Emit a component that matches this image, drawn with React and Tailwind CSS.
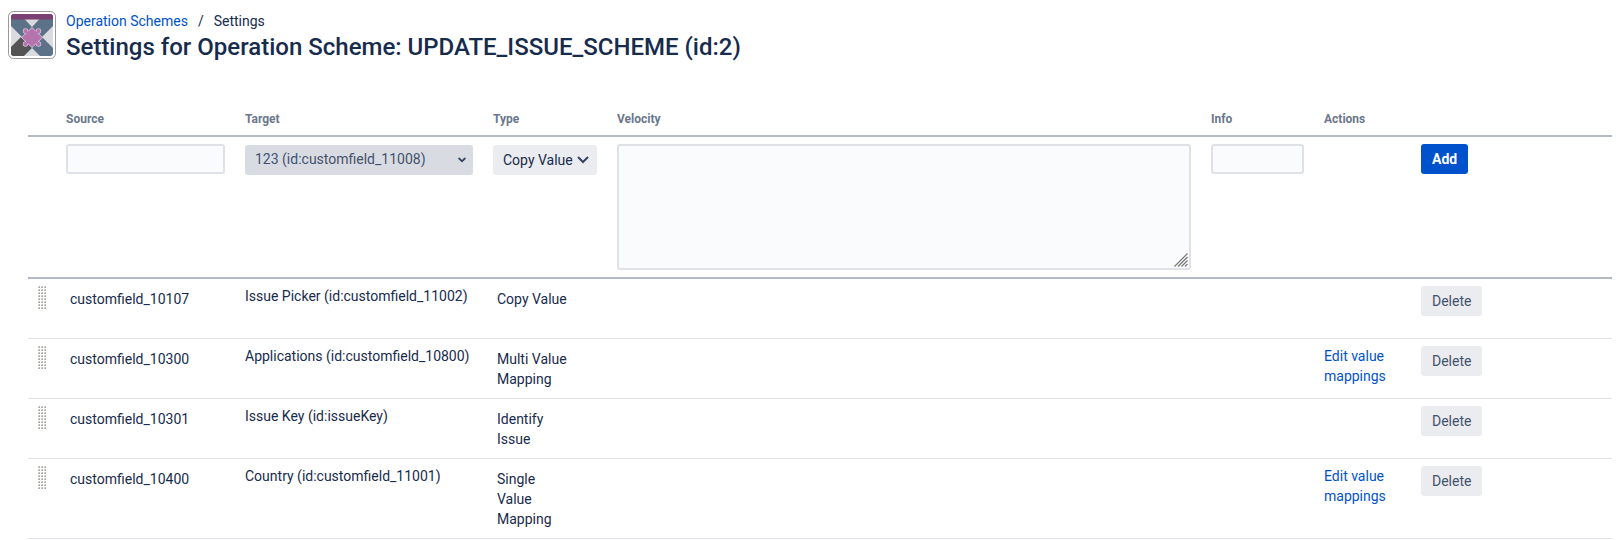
import React from "react";

const fields = [
  {
    source: "customfield_10107",
    target: "Issue Picker (id:customfield_11002)",
    type: "Copy Value",
    editable: false,
  },
  {
    source: "customfield_10300",
    target: "Applications (id:customfield_10800)",
    type: "Multi Value Mapping",
    editable: true,
  },
  {
    source: "customfield_10301",
    target: "Issue Key (id:issueKey)",
    type: "Identify Issue",
    editable: false,
  },
  {
    source: "customfield_10400",
    target: "Country (id:customfield_11001)",
    type: "Single Value Mapping",
    editable: true,
  },
];

const inputStyle =
  "block w-full rounded-[3px] border-2 border-[#dfe1e6] bg-[#fafbfc] px-2 text-sm text-[#172b4d] outline-none";

function Cog({ fill, stroke }) {
  return (
    <g fill={fill} stroke={stroke} strokeWidth="1.4">
      <path d="M24 17 L34 26.500 L24 36 L14 26.500 Z" />
      <rect x="18" y="20.5" width="12" height="12" />
      <circle cx="17.500" cy="20" r="2" />
      <circle cx="30.500" cy="20" r="2" />
      <circle cx="17.500" cy="33" r="2" />
      <circle cx="30.500" cy="33" r="2" />
    </g>
  );
}

function ProjectAvatar() {
  return (
    <svg viewBox="0 0 48 48" className="h-12 w-12 shrink-0" aria-hidden="true">
      <defs>
        <clipPath id="avatar">
          <rect x="3" y="3" width="42" height="42" rx="3" />
        </clipPath>
      </defs>
      <rect x="0.5" y="0.5" width="47" height="47" rx="5" fill="#fff" stroke="#999" />
      <g clipPath="url(#avatar)">
        <rect x="3" y="3" width="42" height="42" fill="#5c7289" />
        <path d="M3 15 L14 26 L3 37 Z" fill="#d9dbdf" />
        <path d="M45 15 L34 26 L45 37 Z" fill="#d9dbdf" />
        <path d="M3 36 L13 26 L24 37 L16 45 H3 Z" fill="#545454" />
        <path d="M16.500 8 H31.500 L24 16 Z" fill="#d9dbdf" />
        <path d="M24 37 L32 45 H16 Z" fill="#d9dbdf" />
        <rect x="3" y="3" width="42" height="5.5" fill="#7b4173" />
      </g>
      <Cog fill="#b574ad" stroke="#d9bfd8" />
      <Cog fill="#b574ad" stroke="none" />
    </svg>
  );
}

function DragHandle() {
  return (
    <svg width="8" height="23" className="block cursor-move" aria-hidden="true">
      <defs>
        <pattern id="grip" width="3" height="3" patternUnits="userSpaceOnUse">
          <rect width="2" height="2" fill="#d9d9d6" />
          <rect x="1" width="1" height="1" fill="#bdbdba" />
          <rect y="1" width="1" height="1" fill="#bdbdba" />
          <rect x="1" y="1" width="1" height="1" fill="#a6a6a3" />
        </pattern>
      </defs>
      <rect width="8" height="23" fill="url(#grip)" />
    </svg>
  );
}

function FieldRow({ field }) {
  return (
    <tr className="h-15 align-top [&>td]:border-b [&>td]:border-[#dfe1e6]">
      <td className="px-[10px] py-[7px]">
        <DragHandle />
      </td>
      <td className="px-[14px] py-[10px]">{field.source}</td>
      <td className="px-[10px] py-[7px] whitespace-nowrap">{field.target}</td>
      <td className="pt-[10px] pr-[37px] pb-[9px] pl-[14px]">{field.type}</td>
      <td></td>
      <td></td>
      <td className="px-[10px] py-[7px]">
        {field.editable && (
          <a href="#mappings" className="text-[#0052cc]">
            Edit value mappings
          </a>
        )}
      </td>
      <td className="px-[10px] py-[7px]">
        <button className="block h-[30px] rounded-[3px] bg-[#ebecf0] px-[11px] text-[#42526e]">
          Delete
        </button>
      </td>
    </tr>
  );
}

export default function App() {
  return (
    <div className="bg-white pb-px font-[Roboto,sans-serif] text-sm text-[#172b4d]">
      <header className="flex gap-[10px] px-2 pt-[11px]">
        <ProjectAvatar />
        <div>
          <nav className="flex h-5 items-center">
            <a href="#schemes" className="text-[#0052cc]">
              Operation Schemes
            </a>
            <span className="px-[10px]">/</span>
            <span>Settings</span>
          </nav>
          <h1 className="text-2xl leading-8 font-medium">
            Settings for Operation Scheme: UPDATE_ISSUE_SCHEME (id:2)
          </h1>
        </div>
      </header>

      <main className="pt-[46px] pr-[11px] pl-7">
        <table className="w-full table-fixed border-separate border-spacing-0">
          <colgroup>
            <col className="w-[28px]" />
            <col className="w-[179px]" />
            <col className="w-[248px]" />
            <col className="w-[124px]" />
            <col />
            <col className="w-[113px]" />
            <col className="w-[97px]" />
            <col className="w-[201px]" />
          </colgroup>
          <thead>
            <tr className="text-left text-xs leading-5 text-[#6b778c] [&>th]:border-b-2 [&>th]:border-[#b3bac5]">
              <th></th>
              <th className="px-[10px] pb-[6px]">Source</th>
              <th className="px-[10px] pb-[6px]">Target</th>
              <th className="px-[10px] pb-[6px]">Type</th>
              <th className="px-[10px] pb-[6px]">Velocity</th>
              <th className="px-[10px] pb-[6px]">Info</th>
              <th className="px-[10px] pb-[6px]">Actions</th>
              <th></th>
            </tr>
          </thead>
          <tbody>
            <tr className="align-top [&>td]:border-b-2 [&>td]:border-[#b3bac5]">
              <td></td>
              <td className="px-[10px] py-[7px]">
                <input type="text" aria-label="Source" className={`${inputStyle} h-[30px]`} />
              </td>
              <td className="px-[10px] py-2">
                <div className="relative">
                  <select
                    aria-label="Target"
                    className="block h-[30px] w-full appearance-none rounded-[3px] bg-[#d9dbe3] px-[10px] pb-[2px] text-[#42526e]"
                  >
                    <option>123 (id:customfield_11008)</option>
                  </select>
                  <svg
                    viewBox="0 0 8 6"
                    className="pointer-events-none absolute top-[12px] right-[7px] h-[6px] w-[8px]"
                    aria-hidden="true"
                  >
                    <path d="M1.200 1.500 L4 4.300 L6.800 1.500" fill="none" stroke="#344563" strokeWidth="1.8" strokeLinecap="round" />
                  </svg>
                </div>
              </td>
              <td className="px-[10px] py-2">
                <div className="relative">
                  <select
                    aria-label="Type"
                    className="block h-[30px] w-full appearance-none rounded-[3px] bg-[#ebecf0] px-[10px]"
                  >
                    <option>Copy Value</option>
                  </select>
                  <svg
                    viewBox="0 0 12 8"
                    className="pointer-events-none absolute top-[11px] right-[8px] h-[8px] w-[12px]"
                    aria-hidden="true"
                  >
                    <path d="M1 1 L6 6 L11 1" fill="none" stroke="#344563" strokeWidth="2" />
                  </svg>
                </div>
              </td>
              <td className="px-[10px] py-[7px]">
                <div className="relative">
                  <textarea aria-label="Velocity" className={`${inputStyle} h-[126px] resize-none py-1`} />
                  <svg
                    viewBox="0 0 14 14"
                    className="pointer-events-none absolute right-[3px] bottom-[3px] h-[14px] w-[14px]"
                    aria-hidden="true"
                  >
                    <path
                      d="M0.500 13.500 L13.500 0.500 M4 13.500 L13.500 4 M7.500 13.500 L13.500 7.500 M11 13.500 L13.500 11"
                      stroke="#777"
                      strokeWidth="1.2"
                    />
                  </svg>
                </div>
              </td>
              <td className="px-[10px] py-[7px]">
                <input type="text" aria-label="Info" className={`${inputStyle} h-[30px]`} />
              </td>
              <td></td>
              <td className="px-[10px] py-[7px]">
                <button className="block h-[30px] rounded-[3px] bg-[#0052cc] px-[11px] font-bold text-white">
                  Add
                </button>
              </td>
            </tr>
            {fields.map((field) => (
              <FieldRow key={field.source} field={field} />
            ))}
          </tbody>
        </table>
      </main>
    </div>
  );
}
